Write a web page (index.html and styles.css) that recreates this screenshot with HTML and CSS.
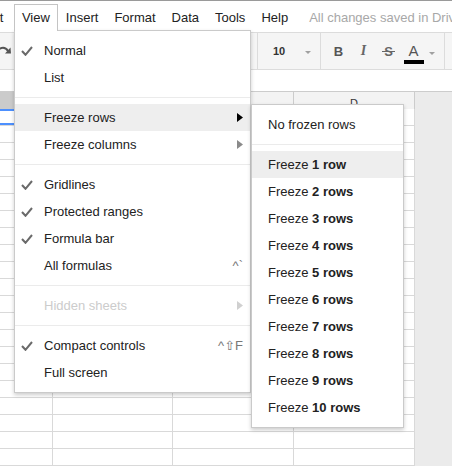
FILE: index.html
```html
<!DOCTYPE html>
<html lang="en">
<head>
<meta charset="utf-8">
<title>Spreadsheet – View menu</title>
<link rel="stylesheet" href="styles.css">
</head>
<body>
<div class="app">
  <div class="menubar">
    <span class="mb-item mb-edit">Edit</span>
    <span class="mb-item is-open">View</span>
    <span class="mb-item">Insert</span>
    <span class="mb-item">Format</span>
    <span class="mb-item">Data</span>
    <span class="mb-item">Tools</span>
    <span class="mb-item">Help</span>
    <span class="save-status">All changes saved in Drive</span>
  </div>

  <div class="toolbar">
    <div class="tb-group tb-history">
      <svg class="ico-redo" width="16" height="12" viewBox="0 0 16 12"><path d="M0 10 C2 3 9 2 12 7" fill="none" stroke="#555" stroke-width="2"/><path d="M9 9.5 L15 9.5 L14.5 3.5 Z" fill="#555"/></svg>
    </div>
    <div class="tb-group tb-size">
      <span class="tb-size-val">10</span>
      <span class="caret caret-size"></span>
    </div>
    <div class="tb-group tb-format">
      <span class="tb-btn tb-bold">B</span>
      <span class="tb-btn tb-italic">I</span>
      <span class="tb-btn"><span class="tb-strike">S</span></span>
      <span class="tb-btn tb-color"><span class="tb-color-a">A</span><span class="tb-color-bar"></span></span>
      <span class="caret caret-color"></span>
    </div>
  </div>

  <div class="formula-bar"></div>

  <div class="grid-area">
    <div class="sheet">
      <div class="col-head is-selected">A</div><div class="col-head">B</div><div class="col-head">C</div><div class="col-head">D</div>
      <div class="cell is-active"></div><div class="cell"></div><div class="cell"></div><div class="cell"></div>
      <div class="cell"></div><div class="cell"></div><div class="cell"></div><div class="cell"></div>
      <div class="cell"></div><div class="cell"></div><div class="cell"></div><div class="cell"></div>
      <div class="cell"></div><div class="cell"></div><div class="cell"></div><div class="cell"></div>
      <div class="cell"></div><div class="cell"></div><div class="cell"></div><div class="cell"></div>
      <div class="cell"></div><div class="cell"></div><div class="cell"></div><div class="cell"></div>
      <div class="cell"></div><div class="cell"></div><div class="cell"></div><div class="cell"></div>
      <div class="cell"></div><div class="cell"></div><div class="cell"></div><div class="cell"></div>
      <div class="cell"></div><div class="cell"></div><div class="cell"></div><div class="cell"></div>
      <div class="cell"></div><div class="cell"></div><div class="cell"></div><div class="cell"></div>
      <div class="cell"></div><div class="cell"></div><div class="cell"></div><div class="cell"></div>
      <div class="cell"></div><div class="cell"></div><div class="cell"></div><div class="cell"></div>
      <div class="cell"></div><div class="cell"></div><div class="cell"></div><div class="cell"></div>
      <div class="cell"></div><div class="cell"></div><div class="cell"></div><div class="cell"></div>
      <div class="cell"></div><div class="cell"></div><div class="cell"></div><div class="cell"></div>
      <div class="cell"></div><div class="cell"></div><div class="cell"></div><div class="cell"></div>
      <div class="cell"></div><div class="cell"></div><div class="cell"></div><div class="cell"></div>
      <div class="cell"></div><div class="cell"></div><div class="cell"></div><div class="cell"></div>
      <div class="cell"></div><div class="cell"></div><div class="cell"></div><div class="cell"></div>
      <div class="cell"></div><div class="cell"></div><div class="cell"></div><div class="cell"></div>
      <div class="cell"></div><div class="cell"></div><div class="cell"></div><div class="cell"></div>
    </div>
    <div class="gutter"></div>
  </div>

  <div class="menu view-menu">
    <div class="menu-item"><span class="chk"><svg width="12" height="10" viewBox="0 0 12 10"><polyline points="1,5 4.5,8.8 11,1" fill="none" stroke="#6a6a6a" stroke-width="2"/></svg></span><span class="label">Normal</span></div>
    <div class="menu-item"><span class="chk"></span><span class="label">List</span></div>
    <div class="menu-sep"></div>
    <div class="menu-item is-hover"><span class="chk"></span><span class="label">Freeze rows</span><svg class="sub-arrow" width="6" height="9" viewBox="0 0 6 9"><polygon points="0,0 6,4.5 0,9"/></svg></div>
    <div class="menu-item"><span class="chk"></span><span class="label">Freeze columns</span><svg class="sub-arrow" width="6" height="9" viewBox="0 0 6 9"><polygon points="0,0 6,4.5 0,9"/></svg></div>
    <div class="menu-sep"></div>
    <div class="menu-item"><span class="chk"><svg width="12" height="10" viewBox="0 0 12 10"><polyline points="1,5 4.5,8.8 11,1" fill="none" stroke="#6a6a6a" stroke-width="2"/></svg></span><span class="label">Gridlines</span></div>
    <div class="menu-item"><span class="chk"><svg width="12" height="10" viewBox="0 0 12 10"><polyline points="1,5 4.5,8.8 11,1" fill="none" stroke="#6a6a6a" stroke-width="2"/></svg></span><span class="label">Protected ranges</span></div>
    <div class="menu-item"><span class="chk"><svg width="12" height="10" viewBox="0 0 12 10"><polyline points="1,5 4.5,8.8 11,1" fill="none" stroke="#6a6a6a" stroke-width="2"/></svg></span><span class="label">Formula bar</span></div>
    <div class="menu-item"><span class="chk"></span><span class="label">All formulas</span><span class="accel">^`</span></div>
    <div class="menu-sep"></div>
    <div class="menu-item is-disabled"><span class="chk"></span><span class="label">Hidden sheets</span><svg class="sub-arrow" width="6" height="9" viewBox="0 0 6 9"><polygon points="0,0 6,4.5 0,9"/></svg></div>
    <div class="menu-sep"></div>
    <div class="menu-item"><span class="chk"><svg width="12" height="10" viewBox="0 0 12 10"><polyline points="1,5 4.5,8.8 11,1" fill="none" stroke="#6a6a6a" stroke-width="2"/></svg></span><span class="label">Compact controls</span><span class="accel">^⇧F</span></div>
    <div class="menu-item"><span class="chk"></span><span class="label">Full screen</span></div>
  </div>

  <div class="menu sub-menu">
    <div class="menu-item"><span class="label">No frozen rows</span></div>
    <div class="menu-sep"></div>
    <div class="menu-item is-hover"><span class="label">Freeze <b>1 row</b></span></div>
    <div class="menu-item"><span class="label">Freeze <b>2 rows</b></span></div>
    <div class="menu-item"><span class="label">Freeze <b>3 rows</b></span></div>
    <div class="menu-item"><span class="label">Freeze <b>4 rows</b></span></div>
    <div class="menu-item"><span class="label">Freeze <b>5 rows</b></span></div>
    <div class="menu-item"><span class="label">Freeze <b>6 rows</b></span></div>
    <div class="menu-item"><span class="label">Freeze <b>7 rows</b></span></div>
    <div class="menu-item"><span class="label">Freeze <b>8 rows</b></span></div>
    <div class="menu-item"><span class="label">Freeze <b>9 rows</b></span></div>
    <div class="menu-item"><span class="label">Freeze <b>10 rows</b></span></div>
  </div>
</div>
</body>
</html>
```

FILE: styles.css
```css
* { box-sizing: border-box; }

html, body {
  margin: 0;
  padding: 0;
  background: #fff;
}

body {
  font-family: "Liberation Sans", Arial, "DejaVu Sans", sans-serif;
  font-size: 13px;
  color: #222;
  overflow: hidden;
}

.app {
  position: relative;
  width: 452px;
  height: 466px;
  overflow: hidden;
  display: flex;
  flex-direction: column;
}

/* ---------- menu bar ---------- */
.menubar {
  display: flex;
  align-items: flex-start;
  flex: none;
  height: 32px;
  border-top: 1px solid #9a9a9a;
  padding-top: 3px;
  white-space: nowrap;
}

.mb-item {
  flex: none;
  height: 26px;
  line-height: 25px;
  padding: 0 7px;
  border: 1px solid transparent;
  border-bottom: 0;
  color: #222;
}

.mb-edit {
  margin-left: -27px;
  padding-right: 9.5px;
}

.mb-item.is-open {
  position: relative;
  z-index: 5;
  height: 27px;
  background: #fff;
  border-color: #c4c4c4;
}

.save-status {
  flex: none;
  margin-left: 13px;
  padding-top: 1px;
  line-height: 25px;
  color: #a8a8a8;
}

/* ---------- toolbar ---------- */
.toolbar {
  display: flex;
  flex: none;
  height: 38px;
  background: #f5f5f5;
  border-top: 1px solid #dcdcdc;
  border-bottom: 1px solid #dcdcdc;
}

.tb-group {
  display: flex;
  align-items: center;
  flex: none;
  height: 100%;
  border-right: 1px solid #dcdcdc;
}

.tb-history { width: 258px; }
.ico-redo { margin-left: -4px; margin-top: -2px; }

.tb-size { width: 63px; padding-left: 15px; }
.tb-size-val {
  font-size: 11px;
  font-weight: bold;
  color: #333;
}

.caret {
  width: 0;
  height: 0;
  border-left: 3px solid transparent;
  border-right: 3px solid transparent;
  border-top: 3px solid #a0a0a0;
}
.caret-size { margin-left: 20px; margin-top: 2px; }
.caret-color { margin-left: 3px; margin-top: 4px; }

.tb-format { width: 124px; padding-left: 5px; }

.tb-btn {
  width: 25px;
  display: flex;
  flex-direction: column;
  align-items: center;
  justify-content: center;
  color: #555;
}

.tb-bold {
  font-size: 13px;
  font-weight: bold;
}

.tb-italic {
  font-family: "Liberation Serif", "Times New Roman", serif;
  font-style: italic;
  font-weight: bold;
  font-size: 14px;
  color: #666;
}

.tb-strike {
  position: relative;
  display: inline-block;
  padding: 0 2px;
  font-size: 13px;
  font-weight: bold;
  color: #666;
}
.tb-strike::after {
  content: "";
  position: absolute;
  left: 0;
  right: 0;
  top: 7px;
  height: 1.5px;
  background: #666;
}

.tb-color { padding-top: 4px; }
.tb-color-a {
  font-size: 15px;
  line-height: 15px;
  color: #555;
}
.tb-color-bar {
  width: 20px;
  height: 4px;
  margin-top: 2px;
  background: #000;
}

/* ---------- formula bar ---------- */
.formula-bar {
  flex: none;
  height: 21px;
  background: #fff;
}

/* ---------- grid ---------- */
.grid-area {
  flex: 1;
  display: flex;
  border-top: 1px solid #cccccc;
  min-height: 0;
}

.sheet {
  flex: none;
  margin-left: -68px;
  display: grid;
  grid-template-columns: 121px 120px 121px 121px;
  grid-auto-rows: 17px;
  align-content: start;
}

.col-head {
  height: 24px;
  background: #f3f3f3;
  border-right: 1px solid #cccccc;
  border-bottom: 1px solid #cccccc;
  text-align: center;
  font-size: 11px;
  line-height: 23px;
  color: #333;
}
.col-head.is-selected { background: #cbcbcb; }

.cell {
  height: 17px;
  border-right: 1px solid #d9d9d9;
  border-bottom: 1px solid #d9d9d9;
  background: #fff;
}
.cell.is-active { box-shadow: inset 0 0 0 2px #4d90fe; }

.gutter {
  flex: 1;
  background: #ebebeb;
}

/* ---------- menus ---------- */
.menu {
  position: absolute;
  background: #fff;
  border: 1px solid #cacaca;
  box-shadow: 0 2px 4px rgba(0, 0, 0, 0.2);
  padding: 6px 0;
  white-space: nowrap;
}

.view-menu {
  left: 14px;
  top: 30px;
  width: 237px;
  z-index: 4;
}

.sub-menu {
  left: 251px;
  top: 104px;
  width: 153px;
  z-index: 6;
}

.menu-item {
  display: flex;
  align-items: center;
  height: 27px;
  padding-right: 7px;
  color: #222;
}

.sub-menu .menu-item { padding-left: 16px; }

.menu-item.is-hover { background: #eeeeee; }

.chk {
  flex: none;
  width: 29px;
  padding-left: 6px;
  display: flex;
  align-items: center;
}

.label { flex: 1; }

.sub-arrow { flex: none; fill: #8a8a8a; }
.menu-item.is-hover .sub-arrow { fill: #000; }

.accel {
  flex: none;
  color: #777;
}

.menu-item.is-disabled { color: #cccccc; }
.menu-item.is-disabled .sub-arrow { fill: #d0d0d0; }

.menu-sep {
  margin: 6px 0;
  border-top: 1px solid #ebebeb;
}
```
